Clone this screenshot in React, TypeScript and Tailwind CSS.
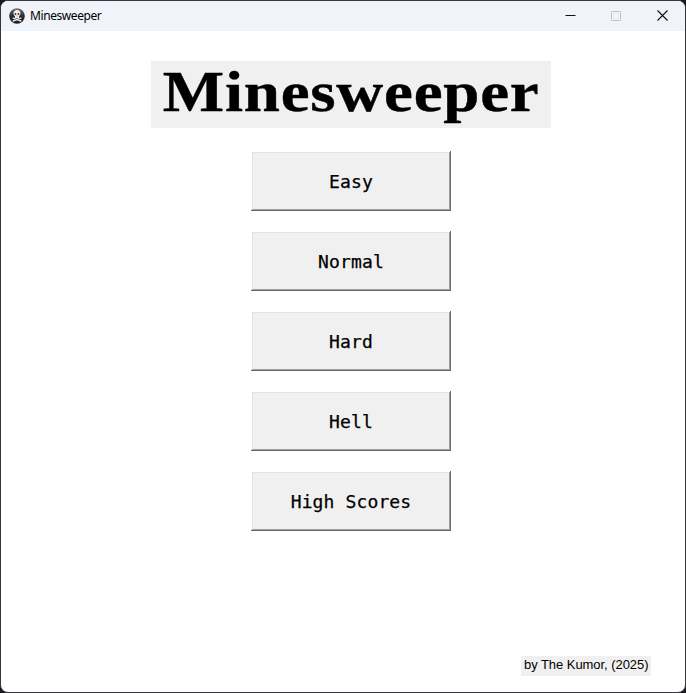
const levels = ['Easy', 'Normal', 'Hard', 'Hell', 'High Scores'];

function SkullIcon() {
  return (
    <svg className="size-4" viewBox="0 0 16 16">
      <defs>
        <linearGradient id="orb" x1="0" y1="0" x2="0" y2="1">
          <stop offset="0" stopColor="#77777a" />
          <stop offset="0.45" stopColor="#303032" />
          <stop offset="1" stopColor="#1c1c1e" />
        </linearGradient>
      </defs>
      <circle cx="8" cy="8" r="7.8" fill="url(#orb)" />
      <path d="M4.2 10.2L11.8 13M11.8 10.2L4.2 13" stroke="#e8e8e8" strokeWidth="1.4" strokeLinecap="round" />
      <path d="M8 2C5.900 2 4.500 3.400 4.500 5.400c0 1.200.5 2 1.400 2.600v1.900h4.200V8c.9-.6 1.400-1.400 1.400-2.600C11.500 3.400 10.100 2 8 2z" fill="#f1f1f1" />
      <circle cx="6.500" cy="6" r="0.9" fill="#29292b" />
      <circle cx="9.500" cy="6" r="0.9" fill="#29292b" />
      <path d="M7.500 8.200L8 7.300L8.500 8.200z" fill="#29292b" />
    </svg>
  );
}

function TitleBar() {
  return (
    <header className="flex h-[30px] shrink-0 items-center bg-[#f0f3fa] pl-2">
      <SkullIcon />
      <span className="ml-[5px] text-[12px] leading-[30px] tracking-[-0.42px] text-black">Minesweeper</span>
      <div className="ml-auto flex text-[#111]">
        <div className="flex w-[45px] justify-center">
          <svg width="11" height="11" viewBox="0 0 11 11"><path d="M.5 4.500h10" stroke="currentColor" /></svg>
        </div>
        <div className="flex w-[46px] justify-center text-[#bfc1c8]">
          <svg width="10" height="11" viewBox="0 0 10 11"><rect x=".5" y=".5" width="9" height="9" rx=".7" fill="none" stroke="currentColor" /></svg>
        </div>
        <div className="flex w-[46px] justify-center">
          <svg className="-translate-y-px" width="11" height="11" viewBox="0 0 11 11"><path d="M.5.5l10 10M10.500.5l-10 10" stroke="currentColor" strokeWidth="1.1" /></svg>
        </div>
      </div>
    </header>
  );
}

export default function App() {
  return (
    <div className="h-[693px] w-[686px] bg-[#1b191b] font-['Noto_Sans',sans-serif]">
      <div className="flex h-full flex-col overflow-hidden rounded-[8px] border border-[#38363a] bg-white">
        <TitleBar />
        <main className="flex flex-1 flex-col items-center pl-4">
          <h1 className="mt-[30px] flex h-[67px] w-[400px] items-start justify-center bg-[#f0f0f0] font-['Liberation_Serif',serif] text-[58px] leading-[62px] font-bold text-black">
            <span className="block scale-x-[1.12] tracking-[0.7px] [-webkit-text-stroke:0.4px_black]">Minesweeper</span>
          </h1>
          <nav className="mt-[23px] flex flex-col gap-5">
            {levels.map((level) => (
              <button
                key={level}
                className="flex h-[60px] w-[200px] items-center justify-center bg-[#f0f0f0] pt-px font-['DejaVu_Sans_Mono',monospace] text-[18px] leading-6 tracking-[0.13px] text-black shadow-[inset_-1px_-1px_#696969,inset_1px_1px_#fff,inset_-2px_-2px_#a0a0a0,inset_2px_2px_#e3e3e3] [-webkit-text-stroke:0.25px_black]"
              >
                {level}
              </button>
            ))}
          </nav>
          <footer className="mt-auto mr-[34px] mb-4 h-5 w-[130px] self-end bg-[#f0f0f0] pl-[3px] font-['Liberation_Sans',sans-serif] text-[13px] leading-[18px] tracking-[-0.05px] whitespace-nowrap text-black">
            by The Kumor, (2025)
          </footer>
        </main>
      </div>
    </div>
  );
}
